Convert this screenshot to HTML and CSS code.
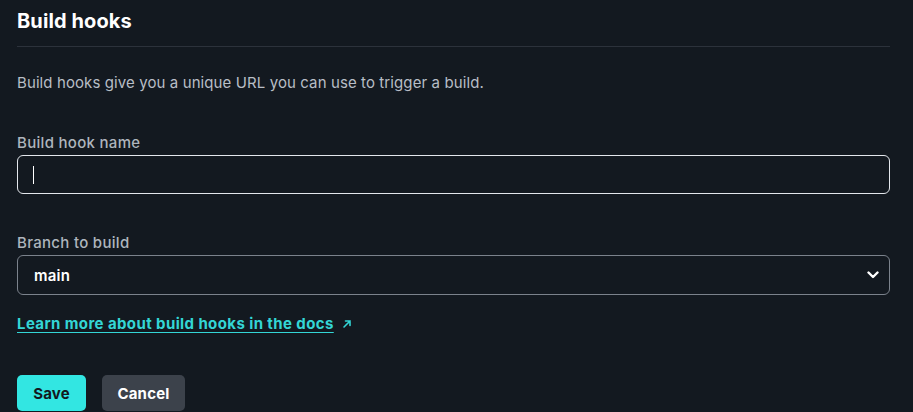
FILE: index.html
```html
<!DOCTYPE html>
<html>
<head>
<meta charset="utf-8">
<link rel="stylesheet" href="styles.css">
</head>
<body>
<div class="page">
  <h2 class="title">Build hooks</h2>
  <p class="desc">Build hooks give you a unique URL you can use to trigger a build.</p>
  <div class="field">
    <label class="label">Build hook name</label>
    <div class="input"><span class="caret"></span></div>
  </div>
  <div class="field field-branch">
    <label class="label">Branch to build</label>
    <div class="select">
      <span class="select-value">main</span>
      <svg class="chev" width="12" height="8" viewBox="0 0 12 8"><path d="M1.5 1.5 L6 6 L10.5 1.5" fill="none" stroke="#fff" stroke-width="2.4" stroke-linecap="round" stroke-linejoin="round"/></svg>
    </div>
  </div>
  <a class="link" href="#"><span class="link-text">Learn more about build hooks in the docs</span><svg class="ext" width="10" height="10" viewBox="0 0 10 10"><path d="M2 8 L8 2 M3.5 2 H8 V6.5" fill="none" stroke="#33d6d6" stroke-width="1.6" stroke-linecap="round"/></svg></a>
  <div class="actions">
    <button class="btn btn-save">Save</button>
    <button class="btn btn-cancel">Cancel</button>
  </div>
</div>
</body>
</html>
```
FILE: styles.css
```css
html, body {
  margin: 0;
  padding: 0;
  background: #131920;
}
body {
  font-family: Inter, "Noto Sans", sans-serif;
  color: #fff;
}
.page {
  padding: 0 23px 0 17px;
}
.title {
  margin: 0;
  padding-top: 8px;
  font-size: 20px;
  font-weight: 700;
  line-height: 26px;
  height: 38px;
  border-bottom: 1px solid #2c323b;
  letter-spacing: 0.1px;
}
.desc {
  margin: 26px 0 0;
  font-size: 15px;
  line-height: 20px;
  color: #b8bec6;
  letter-spacing: 0.1px;
}
.field {
  margin-top: 40px;
}
.field-branch {
  margin-top: 39px;
}
.label {
  display: block;
  font-size: 15px;
  line-height: 20px;
  font-weight: 500;
  color: #aeb5bd;
  margin-bottom: 2px;
  letter-spacing: 0.3px;
}
.input {
  height: 37px;
  border: 1px solid #e3e7ec;
  border-radius: 6px;
  display: flex;
  align-items: center;
  padding-left: 15px;
}
.caret {
  width: 1px;
  height: 18px;
  background: #fff;
  margin-top: 1px;
}
.select {
  height: 38px;
  border: 1px solid #7b828c;
  border-radius: 6px;
  display: flex;
  align-items: center;
  justify-content: space-between;
  padding: 0 10px 0 16px;
}
.select-value {
  font-size: 15px;
  font-weight: 600;
  color: #fff;
  letter-spacing: 0.2px;
}
.chev {
  display: block;
}
.link {
  display: inline-flex;
  align-items: center;
  gap: 8px;
  margin-top: 19px;
  font-size: 15px;
  line-height: 20px;
  font-weight: 700;
  color: #33d6d6;
  text-decoration: none;
  letter-spacing: 0.4px;
}
.link-text {
  text-decoration: underline;
  text-underline-offset: 3px;
}
.actions {
  display: flex;
  gap: 16px;
  margin-top: 41px;
}
.btn {
  font-family: inherit;
  font-size: 15px;
  font-weight: 700;
  height: 36px;
  border: none;
  border-radius: 5px;
  padding: 0;
  cursor: pointer;
  letter-spacing: 0.2px;
}
.btn-save {
  background: #32e6e2;
  color: #131920;
  width: 69px;
}
.btn-cancel {
  background: #3c424b;
  color: #fff;
  width: 83px;
}
```
